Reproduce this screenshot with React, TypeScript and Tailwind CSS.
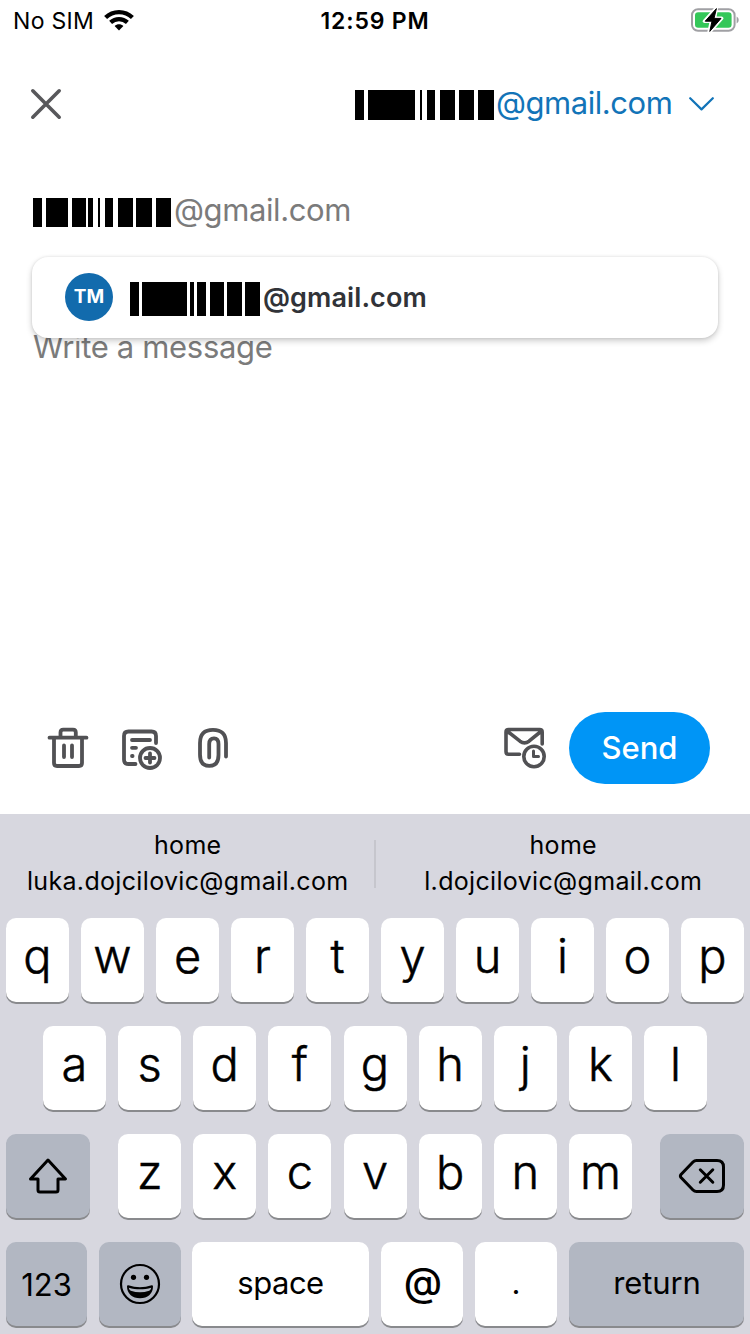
import React from "react";

type Bar = [start: number, width: number];

const headerBars: Bar[] = [[0, 9], [13, 47], [65, 2], [72, 8], [85, 15], [104, 15], [123, 16]];
const recipientBars: Bar[] = [[0, 9], [13, 22], [39, 14], [55, 5], [65, 2], [72, 8], [85, 15], [103, 16], [123, 15]];
const suggestionBars: Bar[] = [[0, 9], [12, 45], [60, 4], [67, 9], [80, 14], [97, 15], [115, 15]];

function Redacted({ bars, width, height }: { bars: Bar[]; width: number; height: number }) {
  return (
    <svg width={width} height={height} className="shrink-0" shapeRendering="crispEdges">
      {bars.map(([x, w]) => (
        <rect key={x} x={x} y={0} width={w} height={height} fill="#000" />
      ))}
    </svg>
  );
}

function StatusBar() {
  return (
    <div className="grid h-10 grid-cols-3 items-center text-[23px] leading-10 text-black">
      <div className="flex items-center pl-[13px] pt-px">
        <span className="w-[91px] whitespace-nowrap tracking-[0.3px]">No SIM</span>
        <svg width="30" height="22" viewBox="0 0 30 22" fill="none" stroke="#000" strokeWidth="4.2" className="mb-[2px]">
          <path d="M1.6 8.6C9 1.2 21 1.2 28.4 8.6" />
          <path d="M6.6 13.4C11.4 8.9 18.6 8.9 23.4 13.4" />
          <path d="M15 21.4L10.6 16.9C13 14.6 17 14.6 19.4 16.9Z" fill="#000" stroke="none" />
        </svg>
      </div>
      <div className="whitespace-nowrap pt-px text-center font-semibold tracking-[0.8px]">12:59 PM</div>
      <div className="flex justify-end pr-[11px]">
        <svg width="49" height="26" viewBox="0 0 49 26" className="mb-px">
          <rect x="2" y="2.3" width="42.6" height="21.4" rx="6" fill="none" stroke="#a0a0a4" strokeWidth="2" />
          <path d="M46.6 9.5c2.8 1.4 2.8 5.6 0 7Z" fill="#a0a0a4" />
          <rect x="5" y="5.3" width="36.6" height="15.4" rx="3.2" fill="#34c759" />
          <path d="M26.4 1L14.5 14.2h7L19 25.6 31.6 11.4h-7.2Z" fill="#000" stroke="#fff" strokeWidth="3.6" strokeLinejoin="round" />
          <path d="M26.4 1.6L15.2 14.2h6.8L19.8 24.4 31 11.4h-7Z" fill="#000" stroke="#000" strokeLinejoin="round" />
        </svg>
      </div>
    </div>
  );
}

function Header() {
  return (
    <header className="flex h-32 items-center justify-between pl-[30px] pr-[36px]">
      <svg width="32" height="32" viewBox="0 0 32 32" fill="none" stroke="#58585b" strokeWidth="3.6" strokeLinecap="round">
        <path d="M2.8 2.8L29.2 29.2M29.2 2.8L2.8 29.2" />
      </svg>
      <div className="flex items-center">
        <div className="pt-[2px]"><Redacted bars={headerBars} width={141} height={30} /></div>
        <span className="w-[193px] whitespace-nowrap pb-[2px] text-[31px] leading-10 tracking-[-0.45px] text-[#1274b8]">@gmail.com</span>
        <svg width="25" height="14" viewBox="0 0 25 14" fill="none" stroke="#1274b8" strokeWidth="2.2" strokeLinecap="round" strokeLinejoin="round">
          <path d="M1.2 1.2L12.5 12.4L23.8 1.2" />
        </svg>
      </div>
    </header>
  );
}

function Suggestion() {
  return (
    <div className="absolute left-8 top-[89px] flex h-[81px] w-[686px] items-center rounded-2xl bg-white pl-[33px] shadow-[0_3px_6px_rgba(0,0,0,0.2),0_0_3px_rgba(0,0,0,0.1)]">
      <div className="mb-px flex size-12 items-center justify-center rounded-full bg-[#126bad] pt-px text-[19px] font-bold text-white">TM</div>
      <div className="ml-[17px] pt-[3px]"><Redacted bars={suggestionBars} width={133} height={34} /></div>
      <span className="whitespace-nowrap text-[27px] font-semibold leading-8 tracking-[0.1px] text-[#313338]">@gmail.com</span>
    </div>
  );
}

function Composer() {
  return (
    <main className="relative h-[514px] px-[33px]">
      <div className="flex h-[86px] items-center">
        <div className="pt-[3px]"><Redacted bars={recipientBars} width={141} height={29} /></div>
        <span className="whitespace-nowrap pb-[2px] text-[31px] leading-10 tracking-[-0.4px] text-[#7b7b7b]">@gmail.com</span>
      </div>
      <div className="pt-[73px] text-[31px] leading-10 tracking-[-0.33px] text-[#7b7b7b]">Write a message</div>
      <Suggestion />
    </main>
  );
}

function Toolbar() {
  return (
    <div className="flex h-[132px] items-center justify-between pl-[47px] pr-10">
      <div className="flex items-center gap-[30px]">
        <svg width="42" height="44" viewBox="0 0 42 44" fill="none" stroke="#515154" strokeWidth="3.8" strokeLinecap="round" strokeLinejoin="round">
          <path d="M2.5 11.7H39.5M7 12V37Q7 40 10 40H32Q35 40 35 37V12M13.5 11V6.5Q13.5 3.7 16.3 3.7H26Q28.8 3.7 28.8 6.5V11M17 19.5V31M25 19.5V31" />
        </svg>
        <svg width="44" height="44" viewBox="0 0 44 44" fill="none" stroke="#515154" strokeWidth="3.8" strokeLinecap="round" strokeLinejoin="round">
          <path d="M37 17V10Q37 5.5 32.5 5.5H9.5Q5 5.5 5 10V33.5Q5 38 9.5 38H16.5M13 14H31M13 21.8H17M13 30H13.6" />
          <circle cx="31" cy="32" r="10" />
          <path d="M31 27.5V36.5M26.5 32H35.5" />
        </svg>
        <svg width="34" height="44" viewBox="0 0 34 44" fill="none" stroke="#515154" strokeWidth="3.8" strokeLinecap="round" strokeLinejoin="round" className="ml-[3px]">
          <path d="M30 30.5V17Q30 3.9 17 3.9Q4 3.9 4 17V28.5Q4 39.9 13.3 39.9Q22.5 39.9 22.5 29V18Q22.5 12.3 18 12.3Q13.2 12.3 13.2 18V31.5" />
        </svg>
      </div>
      <div className="flex items-center gap-[22px]">
        <svg width="44" height="44" viewBox="0 0 44 44" fill="none" stroke="#515154" strokeWidth="3.6" strokeLinecap="round" strokeLinejoin="round">
          <path d="M39.2 18V6Q39.2 3.5 36.7 3.5H5.5Q3 3.5 3 6V25.5Q3 28.2 5.5 28.2H16.5M4 5L17 15.2Q21.5 18.5 26 15.2L38.5 5" />
          <circle cx="31" cy="30.5" r="10.2" />
          <path d="M30.5 25V30.5H35.5" strokeWidth="3" />
        </svg>
        <button className="h-[72px] w-[141px] rounded-full bg-[#0095f6] text-[31px] font-medium leading-[72px] text-white">Send</button>
      </div>
    </div>
  );
}

const keyBase = "flex h-[84px] shrink-0 items-center justify-center rounded-[10px] text-black shadow-[0_2px_0_#898a8d]";

function LetterKey({ letter }: { letter: string }) {
  return <div className={`${keyBase} w-[63px] bg-white pb-[9px] text-[47px] font-light leading-none [-webkit-text-stroke:0.5px_#000]`}>{letter}</div>;
}

function Letters({ letters }: { letters: string }) {
  return <>{letters.split("").map((c) => <LetterKey key={c} letter={c} />)}</>;
}

function Keyboard() {
  return (
    <section className="h-[520px] bg-[#d7d7df] text-black">
      <div className="flex h-[104px] items-center pb-1 text-center text-[25px] leading-9 tracking-[0.33px]">
        <div className="w-[375px] pb-[2px] pl-px">
          <div>home</div>
          <div>luka.dojcilovic@gmail.com</div>
        </div>
        <div className="-ml-px h-12 w-[2px] bg-[#c6c6cd]" />
        <div className="w-[375px] pb-[2px] pl-px">
          <div>home</div>
          <div>l.dojcilovic@gmail.com</div>
        </div>
      </div>
      <div className="flex flex-col gap-6">
        <div className="flex justify-between px-1.5"><Letters letters="qwertyuiop" /></div>
        <div className="flex justify-between px-[43px]"><Letters letters="asdfghjkl" /></div>
        <div className="flex justify-between px-1.5">
          <div className={`${keyBase} w-[84px] bg-[#b2b7c2]`}>
            <svg width="42" height="38" viewBox="0 0 42 38" fill="none" stroke="#000" strokeWidth="3" strokeLinejoin="round">
              <path d="M21 3L38.5 22H31V33Q31 35 29 35H13Q11 35 11 33V22H3.5Z" />
            </svg>
          </div>
          <div className="flex w-[514px] justify-between pl-[0.2px]"><Letters letters="zxcvbnm" /></div>
          <div className={`${keyBase} w-[84px] bg-[#b2b7c2]`}>
            <svg width="48" height="36" viewBox="0 0 48 36" fill="none" stroke="#000" strokeWidth="3" strokeLinejoin="round" strokeLinecap="round">
              <path d="M18.5 2.5H39Q45.5 2.5 45.5 9V27Q45.5 33.5 39 33.5H18.5Q16.5 33.5 15 32L3 19.5Q1.8 18 3 16.5L15 4Q16.5 2.5 18.5 2.5Z" />
              <path d="M22.3 11.8L34.8 24.2M34.8 11.8L22.3 24.2" />
            </svg>
          </div>
        </div>
        <div className="flex px-1.5 text-[31px] leading-none">
          <div className={`${keyBase} w-[81px] bg-[#b2b7c2]`}>123</div>
          <div className={`${keyBase} ml-3 w-[82px] bg-[#b2b7c2]`}>
            <svg width="42" height="42" viewBox="0 0 42 42">
              <circle cx="21" cy="21" r="19" fill="none" stroke="#000" strokeWidth="2.2" />
              <circle cx="14.5" cy="14.3" r="2.6" />
              <circle cx="27.5" cy="14.3" r="2.6" />
              <path d="M9 23.3C16 25.6 26 25.6 33 23.3C33 30.5 28 34.2 21 34.2S9 30.5 9 23.3Z" fill="#000" stroke="#000" strokeWidth="2" strokeLinejoin="round" />
              <path d="M9.8 24.8C17 26.8 25 26.8 32.2 24.8C31.8 26.4 31.2 27.2 30.2 27.8C24 29.8 18 29.8 11.8 27.8C10.8 27.2 10.2 26.4 9.8 24.8Z" fill="#b2b7c2" />
            </svg>
          </div>
          <div className={`${keyBase} ml-[11px] w-[177px] bg-white pb-[3px] tracking-[-0.5px]`}>space</div>
          <div className={`${keyBase} ml-3 w-[82px] bg-white pb-[5px] pl-0.5 text-[39px] font-medium`}>@</div>
          <div className={`${keyBase} ml-3 w-[82px] bg-white pb-[4px]`}>.</div>
          <div className={`${keyBase} ml-3 w-[175px] bg-[#b2b7c2] pb-[3px] pl-px tracking-[-0.15px]`}>return</div>
        </div>
      </div>
    </section>
  );
}

export default function App() {
  return (
    <div className="h-[1334px] w-[750px] overflow-hidden bg-white font-['Inter',sans-serif]">
      <StatusBar />
      <Header />
      <Composer />
      <Toolbar />
      <Keyboard />
    </div>
  );
}
